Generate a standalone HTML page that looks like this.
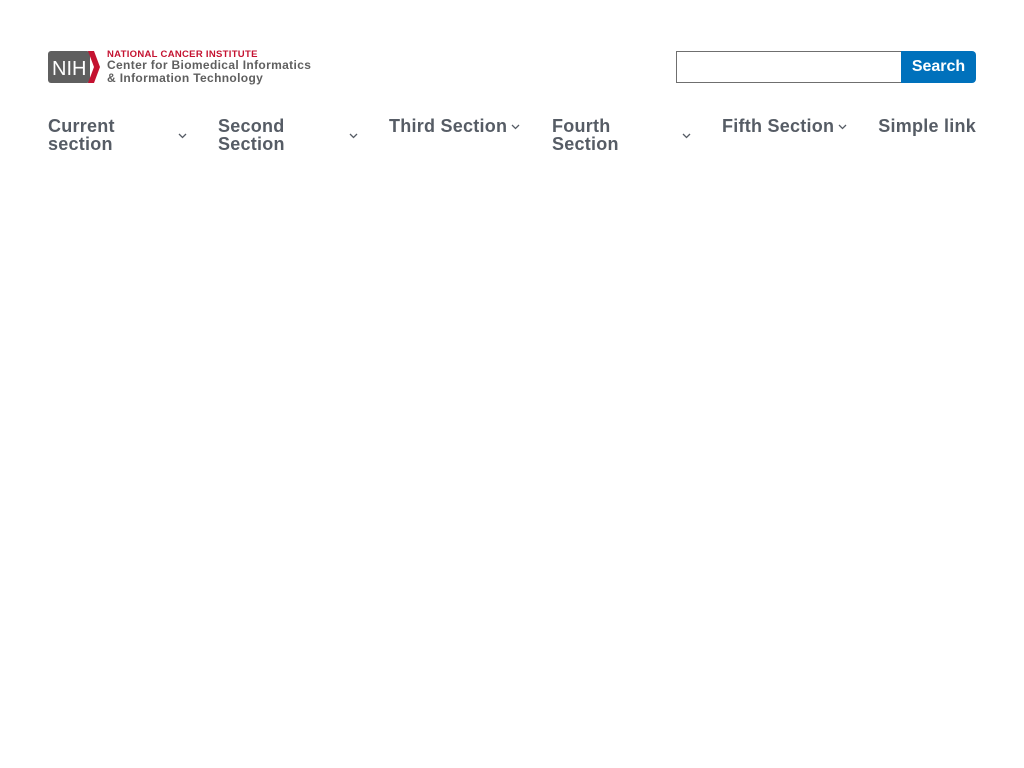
<!DOCTYPE html>
<html><head><meta charset="utf-8"><style>
body{margin:0;background:#fff;width:1024px;height:768px;position:relative;font-family:"Liberation Sans",sans-serif;overflow:hidden}
.a{position:absolute}
.nav{position:absolute;color:#565c65;font-weight:bold;font-size:18px;line-height:18px;white-space:nowrap;letter-spacing:0.25px}
.chev{position:absolute;width:9px;height:6px}
</style></head><body>
<svg class="a" style="left:48px;top:51px" width="52" height="33" viewBox="0 0 52 33">
<rect x="0" y="0" width="42" height="32" rx="3" fill="#5f5f5f"/>
<polygon points="40,0 46,0 52,16 46,32 40,32 46,16" fill="#c41230"/>
<text x="4" y="24" font-family="Liberation Sans" font-size="20" fill="#fff">NIH</text>
</svg>
<div class="a" style="left:107px;top:49px;color:#c41230;font-weight:bold;font-size:9.5px;line-height:11px;letter-spacing:0.3px">NATIONAL CANCER INSTITUTE</div>
<div class="a" style="left:107px;top:59px;color:#5f5f5f;font-weight:bold;font-size:12px;line-height:13px;letter-spacing:0.35px">Center for Biomedical Informatics<br>&amp; Information Technology</div>
<div class="a" style="left:676px;top:51px;width:224px;height:30px;border:1px solid #6f6f6f"></div>
<div class="a" style="left:901px;top:51px;width:75px;height:32px;background:#0071bc;border-radius:0 4px 4px 0;color:#fff;font-weight:bold;font-size:16px;line-height:32px;text-align:center">Search</div>
<div class="nav" style="left:48px;top:117px">Current<br>section</div>
<svg class="chev" style="left:178px;top:133px" viewBox="0 0 9 6"><path d="M1 1l3.5 3.5L8 1" fill="none" stroke="#565c65" stroke-width="1.3"/></svg>
<div class="nav" style="left:218px;top:117px">Second<br>Section</div>
<svg class="chev" style="left:349px;top:133px" viewBox="0 0 9 6"><path d="M1 1l3.5 3.5L8 1" fill="none" stroke="#565c65" stroke-width="1.3"/></svg>
<div class="nav" style="left:389px;top:117px">Third Section</div>
<svg class="chev" style="left:511px;top:124px" viewBox="0 0 9 6"><path d="M1 1l3.5 3.5L8 1" fill="none" stroke="#565c65" stroke-width="1.3"/></svg>
<div class="nav" style="left:552px;top:117px">Fourth<br>Section</div>
<svg class="chev" style="left:682px;top:133px" viewBox="0 0 9 6"><path d="M1 1l3.5 3.5L8 1" fill="none" stroke="#565c65" stroke-width="1.3"/></svg>
<div class="nav" style="left:722px;top:117px">Fifth Section</div>
<svg class="chev" style="left:838px;top:124px" viewBox="0 0 9 6"><path d="M1 1l3.5 3.5L8 1" fill="none" stroke="#565c65" stroke-width="1.3"/></svg>
<div class="nav" style="left:869px;top:117px;width:107px;text-align:right">Simple link</div>
</body></html>
